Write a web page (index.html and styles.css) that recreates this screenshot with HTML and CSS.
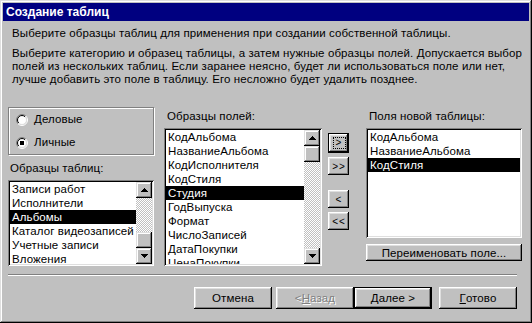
FILE: index.html
```html
<!DOCTYPE html>
<html lang="ru">
<head>
<meta charset="utf-8">
<title>Создание таблиц</title>
<link rel="stylesheet" href="styles.css">
</head>
<body>
<div class="window">
  <div class="titlebar">Создание таблиц</div>
  <div class="content">
    <p class="intro">Выберите образцы таблиц для применения при создании собственной таблицы.</p>
    <p class="intro intro2">Выберите категорию и образец таблицы, а затем нужные образцы полей. Допускается выбор<br>полей из нескольких таблиц. Если заранее неясно, будет ли использоваться поле или нет,<br>лучше добавить это поле в таблицу. Его несложно будет удалить позднее.</p>

    <div class="main">
      <div class="col col-left">
        <div class="group">
          <div class="radio">
            <svg class="radio-ico" width="12" height="12" viewBox="0 0 12 12">
              <defs>
                <linearGradient id="ro" x1="0" y1="0" x2="1" y2="1"><stop offset="0.5" stop-color="#808080"/><stop offset="0.5" stop-color="#ffffff"/></linearGradient>
                <linearGradient id="ri" x1="0" y1="0" x2="1" y2="1"><stop offset="0.5" stop-color="#000000"/><stop offset="0.5" stop-color="#dfdfdf"/></linearGradient>
              </defs>
              <circle cx="6" cy="6" r="5.5" fill="none" stroke="url(#ro)"/>
              <circle cx="6" cy="6" r="4.5" fill="#fff" stroke="url(#ri)"/>
            </svg>
            <span>Деловые</span>
          </div>
          <div class="radio">
            <svg class="radio-ico" width="12" height="12" viewBox="0 0 12 12">
              <circle cx="6" cy="6" r="5.5" fill="none" stroke="url(#ro)"/>
              <circle cx="6" cy="6" r="4.5" fill="#fff" stroke="url(#ri)"/>
              <rect x="4" y="4" width="4" height="4" fill="#000"/>
            </svg>
            <span>Личные</span>
          </div>
        </div>
        <div class="label lbl-tables">Образцы таблиц:</div>
        <div class="listbox lb-tables">
          <ul class="items">
            <li>Записи работ</li>
            <li>Исполнители</li>
            <li class="sel">Альбомы</li>
            <li>Каталог видеозаписей</li>
            <li>Учетные записи</li>
            <li>Вложения</li>
          </ul>
          <div class="scrollbar">
            <div class="sb-btn"><svg width="7" height="4" viewBox="0 0 7 4"><path d="M3 0h1v1h1v1h1v1h1v1H0V3h1V2h1V1h1z" fill="#000"/></svg></div>
            <div class="sb-track sb-track-end"><div class="sb-thumb"></div></div>
            <div class="sb-btn"><svg width="7" height="4" viewBox="0 0 7 4"><path d="M0 0h7v1H6v1H5v1H4v1H3V3H2V2H1V1H0z" fill="#000"/></svg></div>
          </div>
        </div>
      </div>

      <div class="col col-fields">
        <div class="label">Образцы полей:</div>
        <div class="listbox lb-fields">
          <ul class="items">
            <li>КодАльбома</li>
            <li>НазваниеАльбома</li>
            <li>КодИсполнителя</li>
            <li>КодСтиля</li>
            <li class="sel">Студия</li>
            <li>ГодВыпуска</li>
            <li>Формат</li>
            <li>ЧислоЗаписей</li>
            <li>ДатаПокупки</li>
            <li>ЦенаПокупки</li>
          </ul>
          <div class="scrollbar">
            <div class="sb-btn"><svg width="7" height="4" viewBox="0 0 7 4"><path d="M3 0h1v1h1v1h1v1h1v1H0V3h1V2h1V1h1z" fill="#000"/></svg></div>
            <div class="sb-track"><div class="sb-thumb"></div></div>
            <div class="sb-btn"><svg width="7" height="4" viewBox="0 0 7 4"><path d="M0 0h7v1H6v1H5v1H4v1H3V3H2V2H1V1H0z" fill="#000"/></svg></div>
          </div>
        </div>
      </div>

      <div class="col col-btns">
        <div class="btn mv default"><span class="focus">&gt;</span></div>
        <div class="btn mv">&gt;&gt;</div>
        <div class="btn mv mv-gap">&lt;</div>
        <div class="btn mv">&lt;&lt;</div>
      </div>

      <div class="col col-right">
        <div class="label">Поля новой таблицы:</div>
        <div class="listbox lb-new">
          <ul class="items">
            <li>КодАльбома</li>
            <li>НазваниеАльбома</li>
            <li class="sel">КодСтиля</li>
          </ul>
        </div>
        <div class="btn rename">Переименовать поле...</div>
      </div>
    </div>

    <div class="sep"></div>

    <div class="footer">
      <div class="btn fbtn">Отмена</div>
      <div class="btn fbtn disabled back">&lt; <u>Н</u>азад</div>
      <div class="btn fbtn default"><u>Д</u>алее &gt;</div>
      <div class="btn fbtn finish"><u>Г</u>отово</div>
    </div>
  </div>
</div>
</body>
</html>
```

FILE: styles.css
```css
* { box-sizing: border-box; }
html, body { margin: 0; padding: 0; }
body {
  width: 532px;
  height: 323px;
  background: #c0c0c0;
  font-family: "Liberation Sans", Arial, sans-serif;
  font-size: 11.5px;
  letter-spacing: 0.1px;
  color: #000;
  overflow: hidden;
}
.window {
  width: 532px;
  height: 323px;
  padding: 3px;
  background: #c0c0c0;
  box-shadow: inset -1px -1px #000, inset 1px 1px #dfdfdf, inset -2px -2px #808080, inset 2px 2px #fff;
  display: flex;
  flex-direction: column;
}
.titlebar {
  height: 18px;
  line-height: 18px;
  background: #000080;
  color: #fff;
  font-weight: bold;
  font-size: 12px;
  letter-spacing: 0;
  padding-left: 3px;
}
.content {
  padding: 6px 7px 0 5px;
}
.intro {
  margin: 0 0 0 4px;
  line-height: 13px;
  white-space: nowrap;
}
.intro2 { margin-top: 7px; }

.main {
  display: flex;
  margin-top: 21px;
  height: 159px;
}
.col { display: flex; flex-direction: column; }
.col-left { width: 146px; }
.col-fields { width: 158px; margin-left: 10px; padding-top: 3px; }
.col-btns { width: 44px; padding-left: 6px; padding-top: 26px; }
.col-right { width: 156px; padding-top: 3px; }

.label { line-height: 13px; height: 13px; padding-left: 2px; }
.col-fields .label, .col-right .label { padding-left: 3px; }

.group {
  height: 48px;
  border: 1px solid #808080;
  box-shadow: inset 1px 1px #fff, 1px 1px #fff;
  padding: 5px 0 0 7px;
}
.radio {
  display: flex;
  align-items: center;
  height: 13px;
  line-height: 13px;
}
.radio + .radio { margin-top: 10px; }
.radio-ico { flex: none; margin-right: 6px; }

.lbl-tables { margin-top: 7px; }

.listbox {
  background: #fff;
  box-shadow: inset 1px 1px #808080, inset -1px -1px #fff, inset 2px 2px #000, inset -2px -2px #dfdfdf;
  padding: 2px;
  display: flex;
  overflow: hidden;
  margin-top: 5px;
}
.lb-tables { height: 86px; }
.lb-fields { height: 138px; }
.lb-new { height: 110px; }

.items {
  list-style: none;
  margin: 0;
  padding: 0;
  flex: 1;
  overflow: hidden;
  min-width: 0;
}
.items li {
  height: 14px;
  line-height: 14px;
  padding-left: 2px;
  white-space: nowrap;
}
.items li.sel { background: #000; color: #fff; }

.scrollbar {
  width: 16px;
  flex: none;
  display: flex;
  flex-direction: column;
}
.sb-btn, .sb-thumb {
  width: 16px;
  height: 16px;
  background: #c0c0c0;
  box-shadow: inset -1px -1px #000, inset 1px 1px #dfdfdf, inset -2px -2px #808080, inset 2px 2px #fff;
  flex: none;
}
.sb-btn { display: flex; align-items: center; justify-content: center; }
.sb-btn svg { display: block; }
.sb-track {
  flex: 1;
  display: flex;
  flex-direction: column;
  background: repeating-conic-gradient(#c0c0c0 0 25%, #fff 0 50%) 0 0 / 2px 2px;
}
.sb-track-end { justify-content: flex-end; }

.btn {
  background: #c0c0c0;
  box-shadow: inset -1px -1px #000, inset 1px 1px #fff, inset -2px -2px #808080, inset 2px 2px #dfdfdf;
  display: flex;
  align-items: center;
  justify-content: center;
  white-space: nowrap;
}
.btn.default {
  box-shadow: inset 0 0 0 1px #000, inset -2px -2px #000, inset 2px 2px #fff, inset -3px -3px #808080, inset 3px 3px #dfdfdf;
}
.mv {
  width: 21px;
  height: 18px;
  font-size: 10px;
  letter-spacing: 1px;
  padding-left: 1px;
}
.mv.default { height: 20px; }
.mv + .mv { margin-top: 4px; }
.mv.mv-gap { margin-top: 15px; }
.focus {
  border: 1px dotted #000;
  width: 13px;
  height: 12px;
  line-height: 10px;
  text-align: center;
}

.rename {
  margin-top: 6px;
  height: 17px;
}

.sep {
  margin-top: 8px;
  height: 2px;
  border-top: 1px solid #808080;
  border-bottom: 1px solid #fff;
  width: 509px;
}

.footer {
  display: flex;
  margin-top: 11px;
  padding-left: 186px;
}
.fbtn {
  width: 78px;
  height: 22px;
}
.back { margin-left: 4px; }
.finish { margin-left: 7px; }
.disabled { color: #808080; text-shadow: 1px 1px #fff; }
u { text-decoration-thickness: 1px; text-underline-offset: 1px; }
```
